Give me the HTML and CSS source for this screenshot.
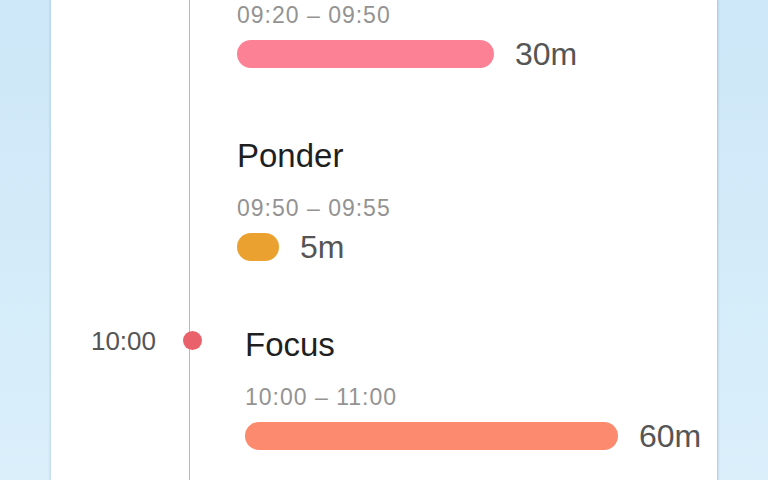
FILE: index.html
```html
<!DOCTYPE html>
<html lang="en">
<head>
  <meta charset="UTF-8" />
  <title>Timeline</title>
  <meta name="viewport" content="width=device-width, initial-scale=1.0" />
  <link rel="stylesheet" href="styles.css">
</head>
<body>
  <div class="card">
    <div class="entry first">
      <div class="hour"></div>
      <div class="content">
        <div class="range">09:20 – 09:50</div>
        <div class="bar-row">
          <span class="bar pink" style="width: 257px"></span>
          <span class="mins">30m</span>
        </div>
      </div>
    </div>

    <div class="entry">
      <div class="hour"></div>
      <div class="content">
        <div class="title">Ponder</div>
        <div class="range">09:50 – 09:55</div>
        <div class="bar-row">
          <span class="bar orange" style="width: 42px"></span>
          <span class="mins">5m</span>
        </div>
      </div>
    </div>

    <div class="entry now">
      <div class="hour">10:00</div>
      <span class="dot"></span>
      <div class="content">
        <div class="title">Focus</div>
        <div class="range">10:00 – 11:00</div>
        <div class="bar-row">
          <span class="bar salmon" style="width: 373px"></span>
          <span class="mins">60m</span>
        </div>
      </div>
    </div>
  </div>
</body>
</html>
```

FILE: styles.css
```css
* {
  box-sizing: border-box;
}

html, body {
  height: 100%;
}

body {
  margin: 0;
  overflow: hidden;
  font-family: 'Liberation Sans', Arial, sans-serif;
  background: linear-gradient(180deg, #cde7f8, #daeffa);
}

.card {
  margin-left: 51px;
  width: 666px;
  min-height: 100%;
  padding-bottom: 80px;
  background: #ffffff;
  box-shadow: 1px 0 2px rgba(90, 130, 160, 0.35), -1px 0 2px rgba(90, 130, 160, 0.2);
}

.entry {
  display: grid;
  grid-template-columns: 138px 1fr;
  position: relative;
}

.hour {
  padding-right: 33px;
  text-align: right;
  font-size: 26px;
  line-height: 32px;
  color: #555555;
}

.content {
  border-left: 1px solid #b9b9b9;
  padding-left: 47px;
  padding-bottom: 64px;
}

.first .content {
  padding-top: 1px;
  padding-bottom: 68px;
}

.now .content {
  padding-left: 55px;
}

.dot {
  position: absolute;
  left: 132px;
  top: 6px;
  width: 19px;
  height: 19px;
  border-radius: 50%;
  background: #e9626b;
}

.title {
  font-size: 33px;
  line-height: 40px;
  color: #1f1f1f;
  margin-bottom: 18px;
}

.range {
  font-size: 23px;
  line-height: 28px;
  letter-spacing: 1px;
  color: #939393;
  margin-bottom: 11px;
}

.bar-row {
  display: flex;
  align-items: center;
  gap: 21px;
  height: 28px;
}

.bar {
  display: block;
  height: 28px;
  border-radius: 14px;
}

.pink { background: #fd8194; }
.orange { background: #eaa12f; }
.salmon { background: #fb8a6f; }

.mins {
  font-size: 32px;
  line-height: 28px;
  color: #555555;
}
```
